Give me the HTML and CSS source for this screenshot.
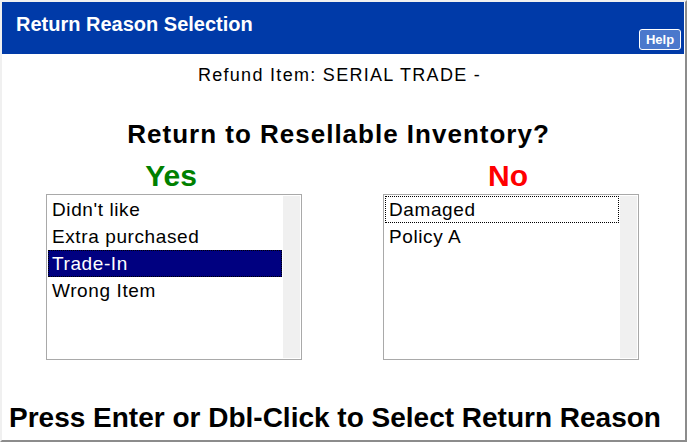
FILE: index.html
```html
<!DOCTYPE html>
<html>
<head>
<meta charset="utf-8">
<link rel="stylesheet" href="styles.css">
</head>
<body>
<div class="window">
  <div class="header">
    <div class="title">Return Reason Selection</div>
    <div class="help">Help</div>
  </div>
  <div class="refund">Refund Item: SERIAL TRADE -</div>
  <div class="question">Return to Resellable Inventory?</div>
  <div class="columns">
    <div class="col">
      <div class="label yes">Yes</div>
      <div class="listbox">
        <div class="items">
          <div class="item">Didn't like</div>
          <div class="item">Extra purchased</div>
          <div class="item selected">Trade-In</div>
          <div class="item">Wrong Item</div>
        </div>
        <div class="track"></div>
      </div>
    </div>
    <div class="col">
      <div class="label no">No</div>
      <div class="listbox">
        <div class="items">
          <div class="item focused">Damaged</div>
          <div class="item">Policy A</div>
        </div>
        <div class="track"></div>
      </div>
    </div>
  </div>
  <div class="footer">Press Enter or Dbl-Click to Select Return Reason</div>
</div>
</body>
</html>
```
FILE: styles.css
```css
html, body {
  margin: 0;
  padding: 0;
  background: #ffffff;
}
body {
  font-family: "Liberation Sans", Arial, sans-serif;
  color: #000;
}
.window {
  width: 687px;
  height: 442px;
  box-sizing: border-box;
  border-style: solid;
  border-width: 2px 2px 2px 2px;
  border-color: #f0f0f0 #8c8c8c #8c8c8c #f0f0f0;
  display: flex;
  flex-direction: column;
  overflow: hidden;
}
.header {
  height: 52px;
  margin-right: 1px;
  background: #003aa8;
  display: flex;
  justify-content: space-between;
  align-items: flex-start;
  padding-left: 14px;
  box-sizing: border-box;
}
.title {
  color: #fff;
  font-weight: bold;
  font-size: 20px;
  line-height: 22px;
  margin-top: 11px;
}
.help {
  align-self: flex-end;
  margin: 0 3px 4px 0;
  width: 42px;
  height: 21px;
  box-sizing: border-box;
  border: 1px solid #fff;
  border-radius: 3px;
  background: #4a78cc;
  color: #fff;
  font-weight: bold;
  font-size: 13px;
  line-height: 19px;
  text-align: center;
}
.refund {
  margin-top: 11px;
  text-align: center;
  font-size: 18px;
  letter-spacing: 1.3px;
  line-height: 20px;
  padding-right: 8px;
}
.question {
  margin-top: 35px;
  text-align: center;
  font-weight: bold;
  font-size: 26px;
  line-height: 28px;
  letter-spacing: 1px;
  padding-right: 10px;
}
.columns {
  display: grid;
  grid-template-columns: 256px 256px;
  column-gap: 81px;
  padding-left: 44px;
}
.col {
  display: flex;
  flex-direction: column;
  align-items: center;
}
.label {
  font-weight: bold;
  font-size: 30px;
  line-height: 34px;
  margin-top: 11px;
  padding-right: 6px;
}
.yes { color: #008000; }
.no { color: #ff0000; }
.listbox {
  align-self: stretch;
  margin-top: 1px;
  height: 166px;
  box-sizing: border-box;
  border: 1px solid #a9a9a9;
  display: flex;
  padding: 1px;
}
.items {
  flex: 1;
  padding-right: 1px;
}
.track {
  width: 17px;
  background: #f0f0f0;
}
.item {
  height: 27px;
  box-sizing: border-box;
  padding-left: 3px;
  font-size: 19px;
  line-height: 25px;
  letter-spacing: 0.6px;
  border: 1px dotted transparent;
}
.item.selected {
  background: #000080;
  color: #fff;
  border-color: #fff;
  outline: 1px dotted #000;
  outline-offset: -1px;
}
.item.focused {
  border-color: #000;
}
.footer {
  margin-top: auto;
  margin-bottom: 7px;
  padding-left: 7px;
  font-weight: bold;
  font-size: 28px;
  line-height: 30px;
}
```
